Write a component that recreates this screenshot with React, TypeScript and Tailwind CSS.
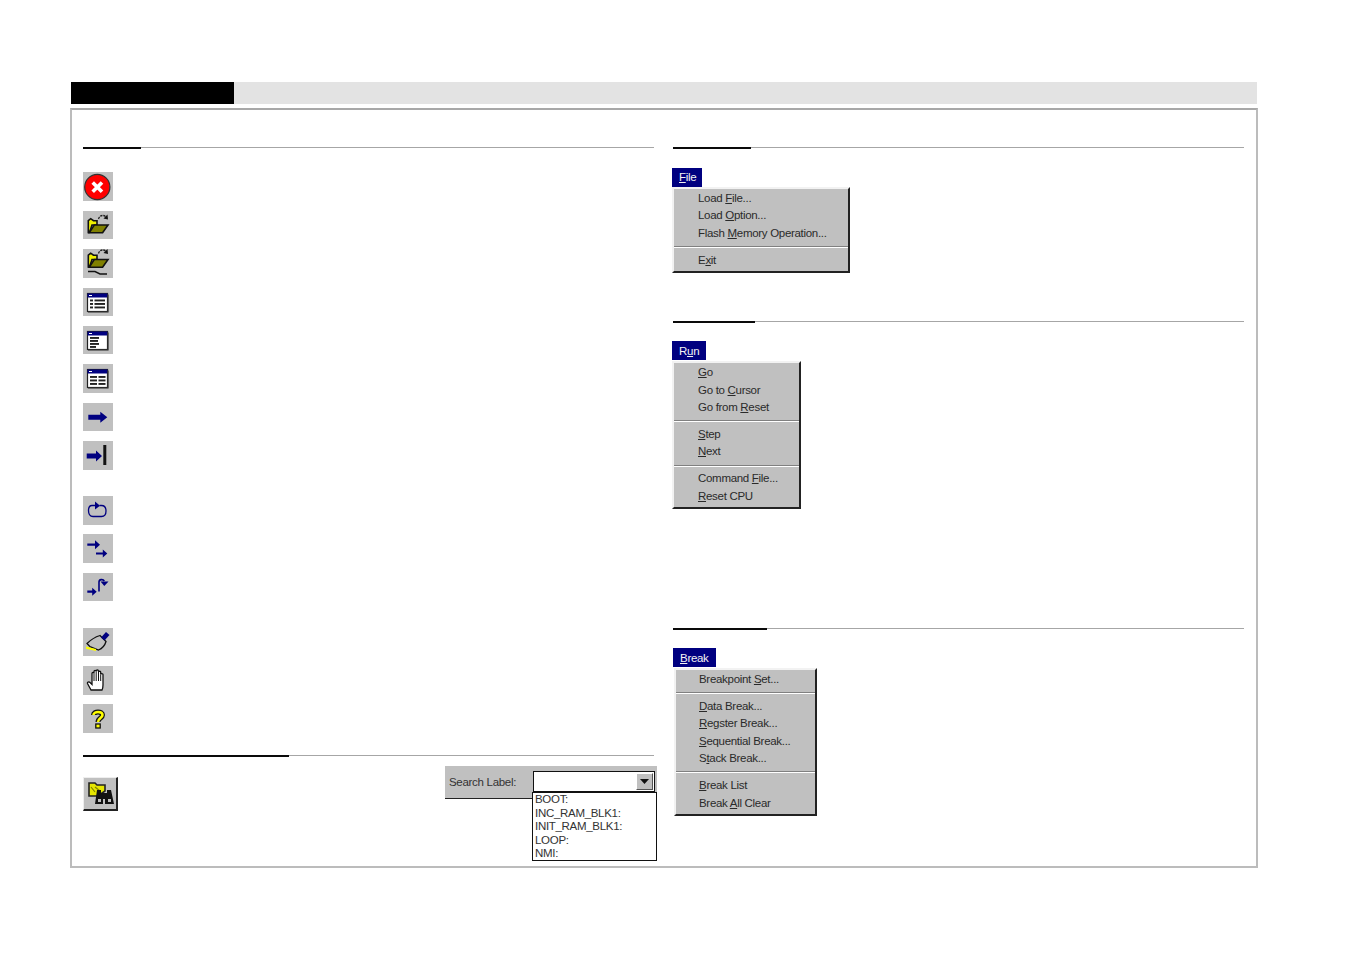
import React from "react";

const Btn = ({ h, mt, children }: { h: string; mt: string; children: React.ReactNode }) => (
  <div className={`w-[30px] bg-[#c0c0c0] ${h} ${mt}`}>{children}</div>
);
const Svg = ({ children, h = 28 }: { children: React.ReactNode; h?: number }) => (
  <svg width="30" height={h} viewBox={`0 0 30 ${h}`} className="block">{children}</svg>
);

const Stop = () => (
  <Svg h={29}>
    <circle cx="14.3" cy="15" r="12.6" fill="#ff0000" stroke="#333" strokeWidth="1.2" />
    <path d="M9.7 10.4 19 19.7M19 10.4 9.7 19.7" stroke="#fff" strokeWidth="3.6" />
  </Svg>
);
const Folder = ({ dy = 0 }: { dy?: number }) => (
  <g transform={`translate(0 ${dy})`}>
    <path d="M15.5 8C16.5 4.5 20 3.5 22.5 5.5" fill="none" stroke="#222" strokeWidth="1.3" strokeDasharray="2.4 0.8" />
    <path d="M20.5 7.5 25 8.5 24.5 3.5Z" fill="#111" />
    <path d="M5.3 21.5V9.7L7.7 7.7 10.5 9.7H14V14H9L6.5 21.5Z" fill="#f0f000" stroke="#111" strokeWidth="1.6" />
    <path d="M6.2 21.7 11.3 14H25L19.6 21.7Z" fill="#808000" stroke="#111" strokeWidth="1.6" />
  </g>
);
const Win = ({ children }: { children: React.ReactNode }) => (
  <Svg>
    <rect x="4.5" y="5.5" width="20" height="18" fill="#fff" stroke="#222" strokeWidth="1.2" />
    <rect x="4.5" y="5.5" width="20" height="4" fill="#000080" />
    <rect x="6" y="7" width="3" height="1" fill="#fff" />
    <path d="M25 6.5V24H5" fill="none" stroke="#333" strokeWidth="1.2" />
    {children}
  </Svg>
);
const L = ({ x, y, w }: { x: number; y: number; w: number }) => <rect x={x} y={y} width={w} height="1.9" fill="#222" />;

const BLUE = "#000080";
const Arrow = ({ x1, x2, y, t, hw, hl }: { x1: number; x2: number; y: number; t: number; hw: number; hl: number }) => (
  <path
    d={`M${x1} ${y - t / 2}H${x2 - hl}V${y - hw / 2}L${x2} ${y}L${x2 - hl} ${y + hw / 2}V${y + t / 2}H${x1}Z`}
    fill={BLUE}
  />
);

const icons: { h: string; mt: string; el: React.ReactNode }[] = [
  { h: "h-[29px]", mt: "mt-[23px]", el: <Stop /> },
  { h: "h-[28px]", mt: "mt-[10px]", el: <Svg><Folder /></Svg> },
  {
    h: "h-[29px]", mt: "mt-[10px]",
    el: (
      <Svg h={29}>
        <Folder dy={-3.5} />
        <path d="M5 22.5H12L17 25H24" fill="none" stroke="#111" strokeWidth="1.4" />
      </Svg>
    ),
  },
  {
    h: "h-[28px]", mt: "mt-[10px]",
    el: (
      <Win>
        <rect x="7" y="11.5" width="3" height="1.9" fill="#222" /><L x={11.5} y={11.5} w={10.5} />
        <rect x="7" y="15" width="3" height="1.9" fill="#222" /><L x={11.5} y={15} w={10.5} />
        <rect x="7" y="18.5" width="3" height="1.9" fill="#222" /><L x={11.5} y={18.5} w={10.5} />
      </Win>
    ),
  },
  {
    h: "h-[28px]", mt: "mt-[10px]",
    el: (
      <Win>
        <L x={7} y={11} w={9} /><L x={7} y={14} w={8} /><L x={7} y={17} w={9} /><L x={7} y={20} w={6} />
      </Win>
    ),
  },
  {
    h: "h-[29px]", mt: "mt-[10px]",
    el: (
      <Win>
        <L x={7} y={12} w={7} /><L x={15.5} y={12} w={7} />
        <L x={7} y={15.5} w={7} /><L x={15.5} y={15.5} w={7} />
        <L x={7} y={19} w={7} /><L x={15.5} y={19} w={7} />
      </Win>
    ),
  },
  { h: "h-[28px]", mt: "mt-[10px]", el: <Svg><Arrow x1={5.3} x2={24.3} y={14.3} t={5} hw={11} hl={7} /></Svg> },
  {
    h: "h-[29px]", mt: "mt-[10px]",
    el: (
      <Svg h={29}>
        <Arrow x1={3.7} x2={19} y={15} t={5} hw={11} hl={6} />
        <rect x="20.3" y="4" width="3" height="20" fill="#111" />
      </Svg>
    ),
  },
  {
    h: "h-[29px]", mt: "mt-[26px]",
    el: (
      <Svg h={29}>
        <path d="M12.5 9.5H9C6.5 9.5 5.5 11.5 5.5 14.5C5.5 18 7 20.5 10 20.5H18.5C21.5 20.5 23 18 23 15C23 12 21.5 9.5 18.5 9.5H16.5" fill="none" stroke={BLUE} strokeWidth="1.3" />
        <path d="M12 5.5 17 9.7 12 13.5Z" fill={BLUE} />
      </Svg>
    ),
  },
  {
    h: "h-[29px]", mt: "mt-[9px]",
    el: (
      <Svg h={29}>
        <Arrow x1={4.3} x2={17} y={10.7} t={2.2} hw={9} hl={5} />
        <Arrow x1={13} x2={24.3} y={19.5} t={2.2} hw={8} hl={4.5} />
      </Svg>
    ),
  },
  {
    h: "h-[28px]", mt: "mt-[10px]",
    el: (
      <Svg>
        <Arrow x1={4.3} x2={13.7} y={18.7} t={2.2} hw={8} hl={4.5} />
        <path d="M16 18.5V9C16 6.3 20 5.8 21.3 8" fill="none" stroke={BLUE} strokeWidth="1.6" />
        <path d="M17.5 8.5H25.5L21.3 13Z" fill={BLUE} />
      </Svg>
    ),
  },
  {
    h: "h-[28px]", mt: "mt-[27px]",
    el: (
      <Svg>
        <path d="M4 15.5C8 11.5 12 9 17 7.5L23 13.5C22 17 19 20.5 15.5 22L7 18.7Z" fill="#c0c0c0" stroke="#111" strokeWidth="1.3" />
        <path d="M18 9.5 23 4 26.5 7 21.5 12.5Z" fill={BLUE} />
        <path d="M3 18.5 13 21V23L3 20.8Z" fill="#ffff00" />
      </Svg>
    ),
  },
  {
    h: "h-[29px]", mt: "mt-[10px]",
    el: (
      <Svg h={29}>
        <path
          d="M8 24 4.5 17.5C4 16 6 15.5 7 16.5L9 18.5V7.5C9 6 11 6 11 7.5V5.5C11 4 13.2 4 13.2 5.5V5C13.2 3.5 15.5 3.5 15.5 5V6C15.5 4.8 17.7 4.8 17.7 6V8.5C17.7 7.3 20 7.3 20 8.5V19C20 21.5 19.5 23 19 24Z"
          fill="#fff"
          stroke="#111"
          strokeWidth="1.3"
        />
        <path d="M11 7.5V15M13.2 5.5V15M15.5 6V15M17.7 8.5V15" stroke="#111" strokeWidth="1" />
      </Svg>
    ),
  },
  {
    h: "h-[29px]", mt: "mt-[9px]",
    el: (
      <Svg h={29}>
        <path d="M10.5 11C10.5 7 19.5 7 19.5 11C19.5 14 15 14 15 18" fill="none" stroke="#111" strokeWidth="5" />
        <path d="M10.5 11C10.5 7 19.5 7 19.5 11C19.5 14 15 14 15 18" fill="none" stroke="#ffff00" strokeWidth="2.6" />
        <rect x="12.8" y="20" width="4.4" height="4" fill="#ffff00" stroke="#111" strokeWidth="1.3" />
      </Svg>
    ),
  },
];

const Rule = ({ w }: { w: string }) => (
  <div className="relative h-[2px] bg-[linear-gradient(#a6a6a6_50%,transparent_50%)]">
    <div className={`absolute left-0 top-0 h-[2px] bg-[#0a0a0a] ${w}`} />
  </div>
);

const U = ({ children }: { children: React.ReactNode }) => <span className="underline underline-offset-[1px]">{children}</span>;

const Item = ({ children }: { children: React.ReactNode }) => (
  <div className="h-[17.4px] pl-[24px] leading-[17.4px] whitespace-nowrap">{children}</div>
);
const Sep = () => (
  <div className="my-[3.8px] h-[2px] border-t border-b border-t-[#808080] border-b-white" />
);

const Menu = ({ title, tabW, menuW, gap, children }: { title: React.ReactNode; tabW: string; menuW: string; gap: string; children: React.ReactNode }) => (
  <div>
    <div className={`h-[19px] bg-[#000080] text-[#f4f4f4] pl-[7px] leading-[19px] ${tabW}`}>{title}</div>
    <div className={`bg-[#c0c0c0] border-t-2 border-l-2 border-t-[#f2f2f2] border-l-[#f2f2f2] border-r-2 border-b-2 border-r-[#222] border-b-[#222] pt-[1px] pb-[2px] text-[#2a2a2a] ${gap} ${menuW}`}>
      {children}
    </div>
  </div>
);

export default function App() {
  return (
    <div className="min-h-[954px] bg-white pt-[82px] font-['Liberation_Sans',Arial,sans-serif] text-[11.5px] tracking-[-0.3px]">
      <div className="ml-[71px] w-[1186px] h-[22px] bg-[#e3e3e3] flex">
        <div className="w-[163px] bg-black" />
      </div>
      <div className="ml-[70px] mt-[4px] w-[1188px] h-[760px] border-2 border-[#bcbcbc] border-t-[#a8a8a8] pt-[37px] pl-[11px] pr-[12px] flex gap-[19px]">
        <div className="w-[571px]">
          <Rule w="w-[58px]" />
          <div className="flex flex-col">
            {icons.map((ic, i) => (
              <Btn key={i} h={ic.h} mt={ic.mt}>{ic.el}</Btn>
            ))}
          </div>
          <div className="mt-[22px]">
            <Rule w="w-[206px]" />
          </div>
          <div className="relative mt-[9px] flex items-start justify-between">
            <div className="mt-[11px] h-[34px] w-[35px] bg-[#c0c0c0] border-t border-l border-t-[#eee] border-l-[#eee] border-r-2 border-b-2 border-r-[#222] border-b-[#222]">
              <svg width="33" height="32" viewBox="0 0 33 32" className="block">
                <path d="M5 5H11L13 7H21V13L14 18H5Z" fill="#e6e600" stroke="#222" strokeWidth="1.6" />
                <path d="M7 9 11 14M11 9 16 13" stroke="#808000" strokeWidth="1.2" />
                <path d="M13 12H17V15H23V12H27L30 26H21V21H19V26H11Z" fill="#111" />
                <rect x="14" y="21" width="3" height="3" fill="#c0c0c0" />
                <rect x="24" y="21" width="3" height="3" fill="#c0c0c0" />
              </svg>
            </div>
            <div className="mr-[-3px] h-[33px] w-[212px] bg-[#c0c0c0] border-b border-b-[#222] flex items-start">
              <div className="ml-[4px] mt-[8px] w-[84px] text-[#333] leading-[16px]">Search Label:</div>
              <div className="mt-[5px] h-[21px] w-[122px] border border-[#111] bg-white flex justify-end items-stretch p-px">
                <div className="w-[17px] bg-[#c0c0c0] border-t border-l border-t-white border-l-white border-r border-b border-r-[#555] border-b-[#555] flex items-center justify-center">
                  <svg width="9" height="5" viewBox="0 0 9 5"><path d="M0 0H9L4.5 5Z" fill="#111" /></svg>
                </div>
              </div>
              <div className="absolute right-[-3px] top-[26px] w-[125px] h-[69px] border border-[#111] bg-white pl-[2px] text-[#333] leading-[13.6px]">
                <div>BOOT:</div>
                <div>INC_RAM_BLK1:</div>
                <div>INIT_RAM_BLK1:</div>
                <div>LOOP:</div>
                <div>NMI:</div>
              </div>
            </div>
          </div>
        </div>
        <div className="flex-1">
          <Rule w="w-[78px]" />
          <div className="mt-[19px] ml-[-1px]">
            <Menu gap="mt-0" tabW="w-[30px]" menuW="w-[178px]" title={<><U>F</U>ile</>}>
              <Item>Load <U>F</U>ile...</Item>
              <Item>Load <U>O</U>ption...</Item>
              <Item>Flash <U>M</U>emory Operation...</Item>
              <Sep />
              <Item>E<U>x</U>it</Item>
            </Menu>
          </div>
          <div className="mt-[48px]"><Rule w="w-[82px]" /></div>
          <div className="mt-[18px] ml-[-1px]">
            <Menu gap="mt-px" tabW="w-[34px] pt-px" menuW="w-[129px]" title={<>R<U>u</U>n</>}>
              <Item><U>G</U>o</Item>
              <Item>Go to <U>C</U>ursor</Item>
              <Item>Go from <U>R</U>eset</Item>
              <Sep />
              <Item><U>S</U>tep</Item>
              <Item><U>N</U>ext</Item>
              <Sep />
              <Item>Command <U>F</U>ile...</Item>
              <Item><U>R</U>eset CPU</Item>
            </Menu>
          </div>
          <div className="mt-[119px]"><Rule w="w-[94px]" /></div>
          <div className="mt-[18px]">
            <Menu gap="mt-px ml-px" tabW="w-[43px] pt-px" menuW="w-[143px]" title={<><U>B</U>reak</>}>
              <div className="-ml-px">
                <Item>Breakpoint <U>S</U>et...</Item>
              </div>
              <Sep />
              <div className="-ml-px">
                <Item><U>D</U>ata Break...</Item>
                <Item><U>R</U>egster Break...</Item>
                <Item><U>S</U>equential Break...</Item>
                <Item>S<U>t</U>ack Break...</Item>
              </div>
              <Sep />
              <div className="-ml-px">
                <Item><U>B</U>reak List</Item>
                <Item>Break <U>A</U>ll Clear</Item>
              </div>
            </Menu>
          </div>
        </div>
      </div>
    </div>
  );
}
